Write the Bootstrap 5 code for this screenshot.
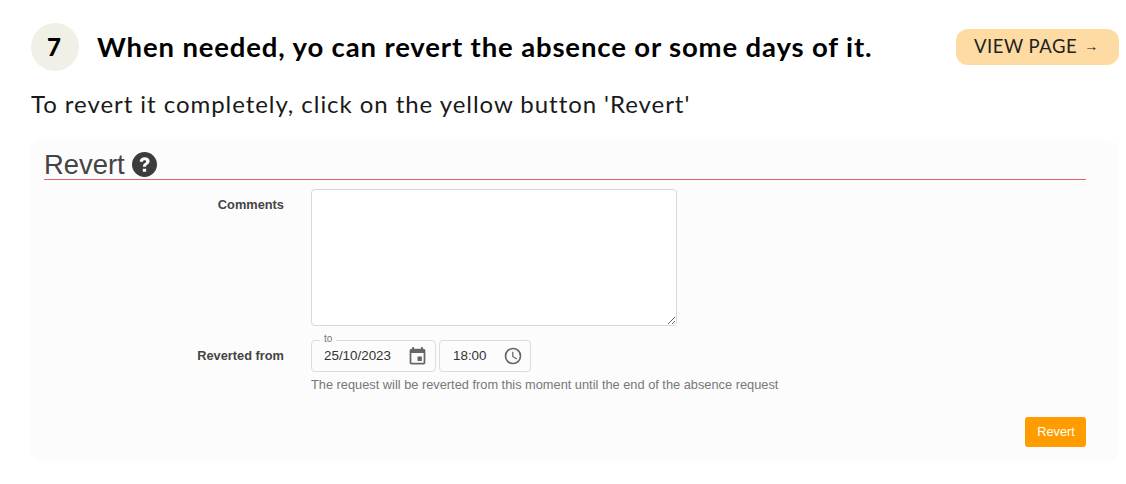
<!DOCTYPE html>
<html lang="en">
<head>
  <meta charset="UTF-8" />
  <meta name="viewport" content="width=device-width, initial-scale=1.0" />
  <title>Revert</title>
  <link href="https://cdn.jsdelivr.net/npm/bootstrap@5.3.3/dist/css/bootstrap.min.css" rel="stylesheet">
  <style>
    body { font-family: "Lato", "Noto Sans", sans-serif; color: #111; background: #fff; }
    .page-wrap { padding: 23px 7px 0 30px; }
    .step-num { width: 48px; height: 48px; margin-left: 1px; padding-right: 2px; background: #f0f0e6; font-size: 24px; font-weight: 900; color: #000; }
    .step-title { font-size: 27.5px; font-weight: 700; line-height: 48px; margin: 0 0 0 18px; color: #000; letter-spacing: .86px; }
    .view-btn { background: #ffdba4; color: #222; font-size: 18.5px; width: 163px; height: 36px; padding: 0 0 0 18px; border-radius: 12px; border: 0; margin-top: 6px; letter-spacing: .5px; text-align: left; white-space: nowrap; }
    .view-arrow { font-family: "Liberation Sans", Arial, sans-serif; font-size: 14px; letter-spacing: 0; margin-left: 2px; vertical-align: 2px; }
    .intro { font-size: 24px; line-height: 32px; margin: 17px 0 0 1px; letter-spacing: .95px; color: #1a1a1a; }
    .panel { background: #fcfcfc; border-radius: 12px; margin-top: 20px; height: 321px; padding: 9px 33px 0 14px; font-family: "Liberation Sans", Arial, sans-serif; }
    .panel-title { font-size: 27.4px; line-height: 32px; color: #444; border-bottom: 1px solid #e4636a; height: 31px; margin: 0; font-weight: 400; }
    .panel-title svg { vertical-align: -3px; }
    .field-label { width: 240px; font-size: 12.8px; font-weight: 700; color: #444; text-align: right; flex: none; }
    .label-comments { padding-top: 15px; }
    .label-from { padding-top: 6px; }
    .field-body { margin-left: 27px; }
    .comments { width: 366px; height: 137px; margin-top: 9px; border: 1px solid #d8d8d8; border-radius: 4px; background: #fff; display: block; }
    .date-row { gap: 3px; margin-top: 14px; }
    .date-box { height: 32px; border: 1px solid #dcdcdc; border-radius: 4px; font-size: 13.4px; color: #333; padding: 0 7px 0 12px; }
    .date-w { width: 125px; }
    .time-w { width: 92px; padding-left: 13px; }
    .float-label { top: -8px; left: 8px; padding: 0 4px; font-size: 10px; line-height: 12px; color: #777; background: #fcfcfc; }
    .hint-text { font-size: 12.8px; color: #777; margin-top: 5px; line-height: 15px; white-space: nowrap; }
    .revert-btn { background: #ff9c00; color: #fff; font-size: 12.8px; width: 61px; height: 30px; border: 0; border-radius: 3px; padding: 0 0 0 1px; }
    .btn-row { margin-top: 25px; }
  </style>
</head>
<body>
  <div class="page-wrap">
    <div class="d-flex align-items-start">
      <div class="step-num rounded-circle d-flex align-items-center justify-content-center flex-shrink-0">7</div>
      <h2 class="step-title flex-grow-1">When needed, yo can revert the absence or some days of it.</h2>
      <button class="view-btn">VIEW PAGE <span class="view-arrow">→</span></button>
    </div>
    <p class="intro">To revert it completely, click on the yellow button 'Revert'</p>
    <div class="panel">
      <h3 class="panel-title">Revert
        <svg width="25" height="25" viewBox="0 0 24 24" fill="#3c3c3c"><path d="M12 0a12 12 0 1 0 0 24 12 12 0 0 0 0-24zm1.600 19h-3.200v-3h3.200v3zm2.600-8.200c-.5.700-1.100 1.100-1.700 1.500-.6.400-1 .9-1 1.800h-3c0-1.700.7-2.600 1.600-3.200.7-.5 1.500-.9 1.500-1.800 0-.8-.6-1.300-1.500-1.300-1 0-1.700.6-1.800 1.700L7.300 9.200C7.500 6.700 9.400 5 12.200 5c2.700 0 4.700 1.500 4.700 3.700 0 .8-.2 1.500-.7 2.100z"/></svg>
      </h3>
      <div class="d-flex">
        <div class="field-label label-comments">Comments</div>
        <div class="field-body"><textarea class="comments" aria-label="Comments"></textarea></div>
      </div>
      <div class="d-flex">
        <div class="field-label label-from date-row">Reverted from</div>
        <div class="field-body">
          <div class="d-flex date-row">
            <div class="date-box date-w position-relative d-flex align-items-center justify-content-between">
              <span class="float-label position-absolute">to</span>
              <span>25/10/2023</span>
              <svg width="21" height="21" viewBox="0 0 24 24" fill="#666"><path d="M19 3h-1V1h-2v2H8V1H6v2H5a2 2 0 0 0-2 2v14a2 2 0 0 0 2 2h14a2 2 0 0 0 2-2V5a2 2 0 0 0-2-2zm0 16H5V8h14v11zM12 12h5v5h-5z"/></svg>
            </div>
            <div class="date-box time-w d-flex align-items-center justify-content-between">
              <span>18:00</span>
              <svg width="20" height="20" viewBox="0 0 24 24" fill="#666"><path d="M12 2a10 10 0 1 0 0 20 10 10 0 0 0 0-20zm0 18a8 8 0 1 1 0-16 8 8 0 0 1 0 16zm.5-13H11v6l5.200 3.200.8-1.300-4.500-2.700V7z"/></svg>
            </div>
          </div>
          <div class="hint-text">The request will be reverted from this moment until the end of the absence request</div>
        </div>
      </div>
      <div class="d-flex justify-content-end btn-row">
        <button class="revert-btn">Revert</button>
      </div>
    </div>
  </div>
</body>
</html>
